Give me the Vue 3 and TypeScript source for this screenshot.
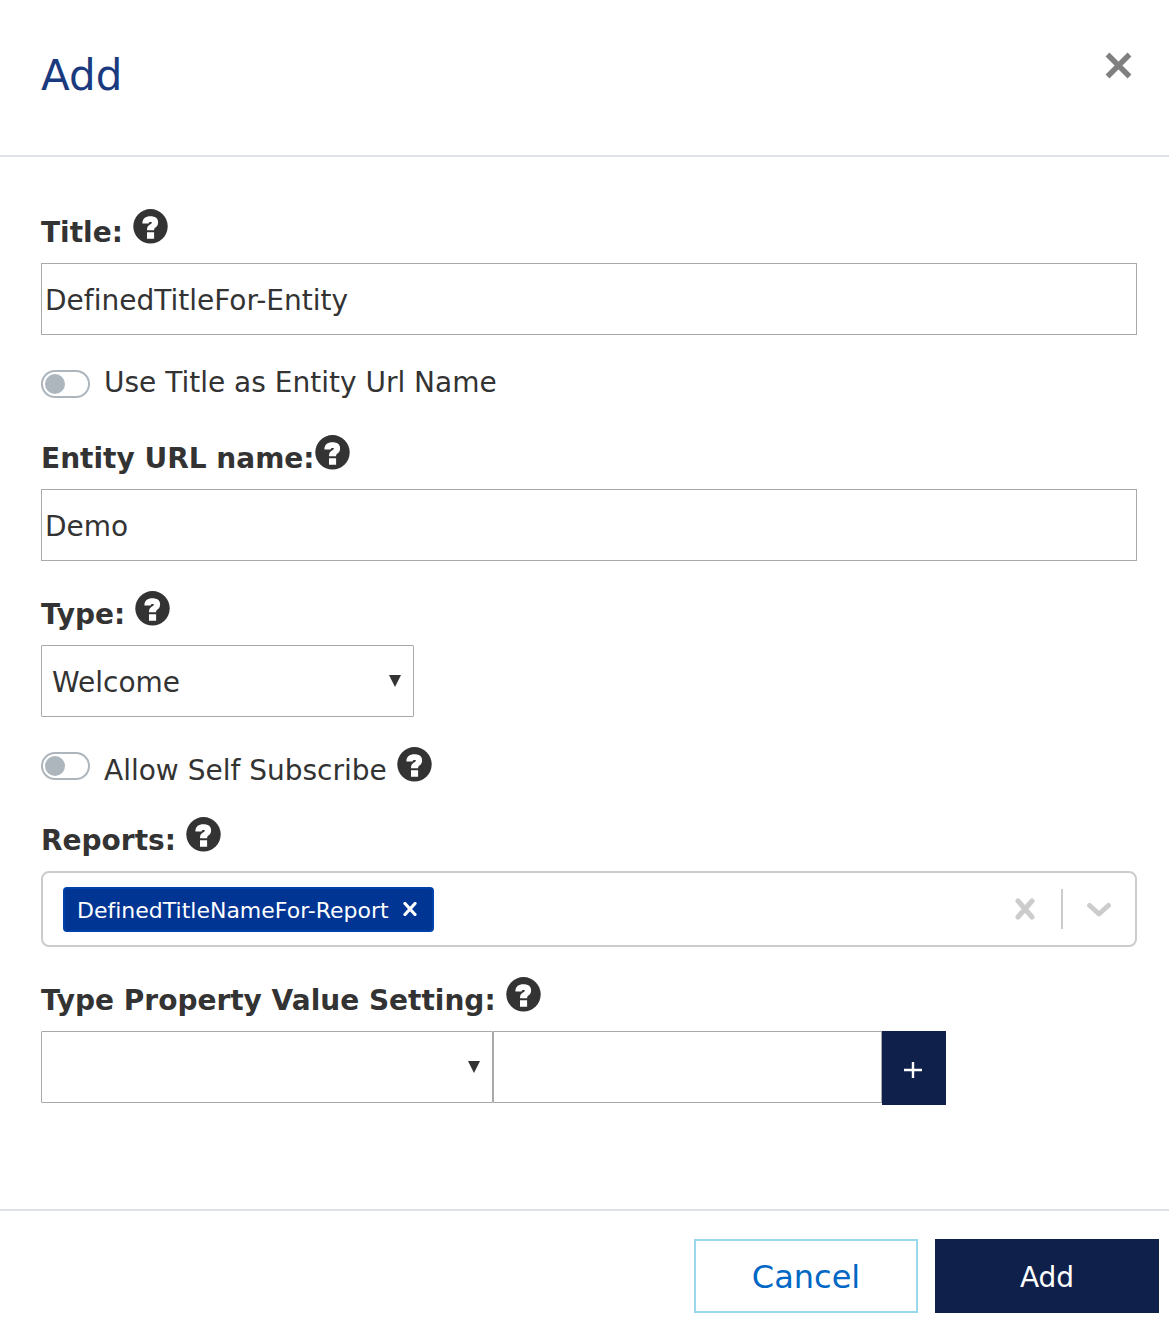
<script setup lang="ts">
import { defineComponent, h, ref } from 'vue'

const title = ref('DefinedTitleFor-Entity')
const urlName = ref('Demo')
const type = ref('Welcome')
const useTitle = ref(false)
const selfSubscribe = ref(false)
const reports = ref<string[]>(['DefinedTitleNameFor-Report'])
const property = ref('')
const propertyValue = ref('')

const HelpIcon = defineComponent({
  props: { topic: { type: String, required: true } },
  setup(props) {
    return () =>
      h('button', { type: 'button', class: 'help', 'aria-label': `Help: ${props.topic}` }, [
        h('svg', { viewBox: '0 0 35 35', width: 35, height: 35, 'aria-hidden': 'true' }, [
          h('circle', { cx: 17.5, cy: 17.3, r: 17.2, fill: '#333' }),
          h('path', {
            fill: '#fff',
            d: 'M9.4 14.4C9.4 9.6 12.6 7.3 17.4 7.3C22.2 7.3 25.1 9.4 25.1 13.2C25.1 16.2 23.8 17.6 22.4 18.6C21.4 19.4 21.2 20 21.1 21.3H14C14 18.2 14.8 17 16.6 15.8C17.8 15 18.8 14.6 18.8 13.7C18.8 13.2 18.3 13.1 17.7 13.1C16.4 13.1 15.9 13.6 15.6 14.4ZM14 23.3H21.1V29.8H14Z',
          }),
        ]),
      ])
  },
})
</script>

<template>
  <form class="dialog" @submit.prevent>
    <header class="head">
      <h1>Add</h1>
      <button type="button" class="close" aria-label="Close">
        <svg viewBox="0 0 28 28" width="28" height="28"><path d="M2.5 2.5L24.5 24.5M24.5 2.5L2.5 24.5" stroke="#808080" stroke-width="5.4" /></svg>
      </button>
    </header>

    <main class="body">
      <div class="field">
        <div class="caption spaced"><label for="title">Title:</label><HelpIcon topic="Title" /></div>
        <input id="title" v-model="title" class="box" type="text" />
      </div>

      <div class="toggle-row">
        <input id="use-title" v-model="useTitle" class="toggle" type="checkbox" />
        <label for="use-title" class="plain">Use Title as Entity Url Name</label>
      </div>

      <div class="field">
        <div class="caption"><label for="url">Entity URL name:</label><HelpIcon topic="Entity URL name" /></div>
        <input id="url" v-model="urlName" class="box" type="text" />
      </div>

      <div class="field">
        <div class="caption spaced"><label for="type">Type:</label><HelpIcon topic="Type" /></div>
        <div class="select type">
          <select id="type" v-model="type" class="box"><option>Welcome</option></select>
          <svg class="arrow" viewBox="0 0 12 12" width="12" height="12"><path d="M0 0H12L6 12Z" fill="#333" /></svg>
        </div>
      </div>

      <div class="toggle-row">
        <input id="self" v-model="selfSubscribe" class="toggle" type="checkbox" />
        <div class="caption spaced regular"><label for="self">Allow Self Subscribe</label><HelpIcon topic="Allow Self Subscribe" /></div>
      </div>

      <div class="field">
        <div class="caption spaced"><span id="reports">Reports:</span><HelpIcon topic="Reports" /></div>
        <div class="multi" role="group" aria-labelledby="reports">
          <div class="chips">
            <span v-for="r in reports" :key="r" class="chip">
              <span class="chip-text">{{ r }}</span>
              <button type="button" :aria-label="`Remove ${r}`" @click="reports = reports.filter((x) => x !== r)">
                <svg viewBox="0 0 14 14" width="14" height="14"><path d="M2 1.5L12 12.5M12 1.5L2 12.5" stroke="#fff" stroke-width="3.2" stroke-linecap="round" /></svg>
              </button>
            </span>
          </div>
          <button type="button" class="clear" aria-label="Clear reports" @click="reports = []">
            <svg viewBox="0 0 20 22" width="20" height="22"><path d="M3 3L17 19M17 3L3 19" stroke="#ccc" stroke-width="5" stroke-linecap="round" /></svg>
          </button>
          <span class="divider"></span>
          <button type="button" class="open" aria-label="Open reports">
            <svg viewBox="0 0 24 16" width="24" height="16"><path d="M2.6 4.5L12 13L21.4 4.5" fill="none" stroke="#ccc" stroke-width="5" stroke-linecap="round" stroke-linejoin="round" /></svg>
          </button>
        </div>
      </div>

      <div class="field">
        <div class="caption spaced"><label for="prop">Type Property Value Setting:</label><HelpIcon topic="Type Property Value Setting" /></div>
        <div class="pair">
          <div class="select prop">
            <select id="prop" v-model="property" class="box"><option value=""></option></select>
            <svg class="arrow" viewBox="0 0 12 12" width="12" height="12"><path d="M0 0H12L6 12Z" fill="#333" /></svg>
          </div>
          <input v-model="propertyValue" class="box value" type="text" aria-label="Property value" />
          <button type="button" class="plus" aria-label="Add property">
            <svg viewBox="0 0 20 18" width="20" height="18"><path d="M0 9H18M9 1V17" stroke="#fff" stroke-width="2.4" /></svg>
          </button>
        </div>
      </div>
    </main>

    <footer class="foot">
      <button type="button" class="cancel">Cancel</button>
      <button type="submit" class="submit">Add</button>
    </footer>
  </form>
</template>

<style>
body {
  background: #fff;
}
.help {
  flex: none;
  width: 35px;
  height: 35px;
  margin-top: 2px;
  padding: 0;
  border: 0;
  background: none;
}
svg {
  display: block;
}
</style>

<style scoped>
.dialog,
.dialog input,
.dialog select,
.dialog button {
  font-family: Verdana, 'DejaVu Sans', sans-serif;
  font-size: 28px;
  font-variant-ligatures: none;
  color: #333;
  box-sizing: border-box;
}
.head {
  display: flex;
  justify-content: space-between;
  align-items: flex-start;
  padding: 50px 36px 53px 41px;
  border-bottom: 2px solid #dee2e6;
}
h1 {
  margin: 0;
  font-size: 42px;
  line-height: 52px;
  font-weight: 400;
  color: #1a3a80;
}
.dialog button {
  padding: 0;
  border: 0;
  background: none;
}
.close {
  margin-top: 2px;
}
.body {
  display: flex;
  flex-direction: column;
  gap: 28px;
  padding: 50px 32px 104px 41px;
}
.caption {
  display: flex;
  align-items: flex-start;
  height: 56px;
  font-weight: 700;
  line-height: 52px;
}
.caption.spaced {
  gap: 10px;
}
.caption.regular {
  height: 42px;
  font-weight: 400;
}
.box {
  display: block;
  width: 100%;
  height: 72px;
  margin: 0;
  padding: 2px 3px 0;
  border: 1px solid #a9a9a9;
  border-radius: 0;
  background: #fff;
  outline: 0;
}
.toggle-row {
  display: flex;
  align-items: flex-start;
  gap: 14px;
  height: 42px;
}
.plain {
  line-height: 40px;
}
.toggle {
  appearance: none;
  flex: none;
  display: flex;
  align-items: center;
  width: 49px;
  height: 28px;
  margin: 7px 0 0;
  padding: 0 2px;
  border: 2px solid #adb5bd;
  border-radius: 14px;
}
.toggle::before {
  content: '';
  width: 20px;
  height: 20px;
  border-radius: 50%;
  background: #adb5bd;
}
.toggle:checked {
  justify-content: flex-end;
}
.select {
  position: relative;
}
.select .box {
  appearance: none;
  padding: 2px 10px 0;
  border-radius: 1px;
}
.type {
  width: 373px;
}
.arrow {
  position: absolute;
  top: 30px;
  right: 13px;
  pointer-events: none;
}
.multi {
  display: flex;
  align-items: center;
  height: 76px;
  padding: 0 24px 0 20px;
  border: 2px solid #ccc;
  border-radius: 8px;
  box-sizing: border-box;
}
.chips {
  flex: 1;
  display: flex;
}
.chip {
  display: flex;
  align-items: center;
  gap: 14px;
  height: 45px;
  padding: 0 15px 0 12px;
  border: 2px solid #0041a8;
  border-radius: 4px;
  box-sizing: border-box;
  background: #003594;
  color: #fff;
  font-size: 22px;
}
.chip-text {
  padding-top: 2px;
}
.divider {
  width: 2px;
  height: 40px;
  margin: 0 24px 0 26px;
  background: #ccc;
}
.pair {
  display: flex;
  align-items: flex-start;
}
.prop {
  width: 452px;
}
.value {
  width: 389px;
}
.dialog .plus {
  display: flex;
  align-items: center;
  justify-content: center;
  width: 64px;
  height: 74px;
  padding-top: 4px;
  background: #0f204b;
}
.foot {
  display: flex;
  justify-content: flex-end;
  gap: 17px;
  padding: 28px 10px 17px;
  border-top: 2px solid #dee2e6;
}
.dialog .foot button {
  width: 224px;
  height: 74px;
  padding-top: 2px;
}
.dialog .foot .cancel {
  border: 2px solid #98d8ea;
  font-size: 32px;
  color: #0067c5;
}
.dialog .foot .submit {
  background: #0f204b;
  color: #fff;
}
</style>
